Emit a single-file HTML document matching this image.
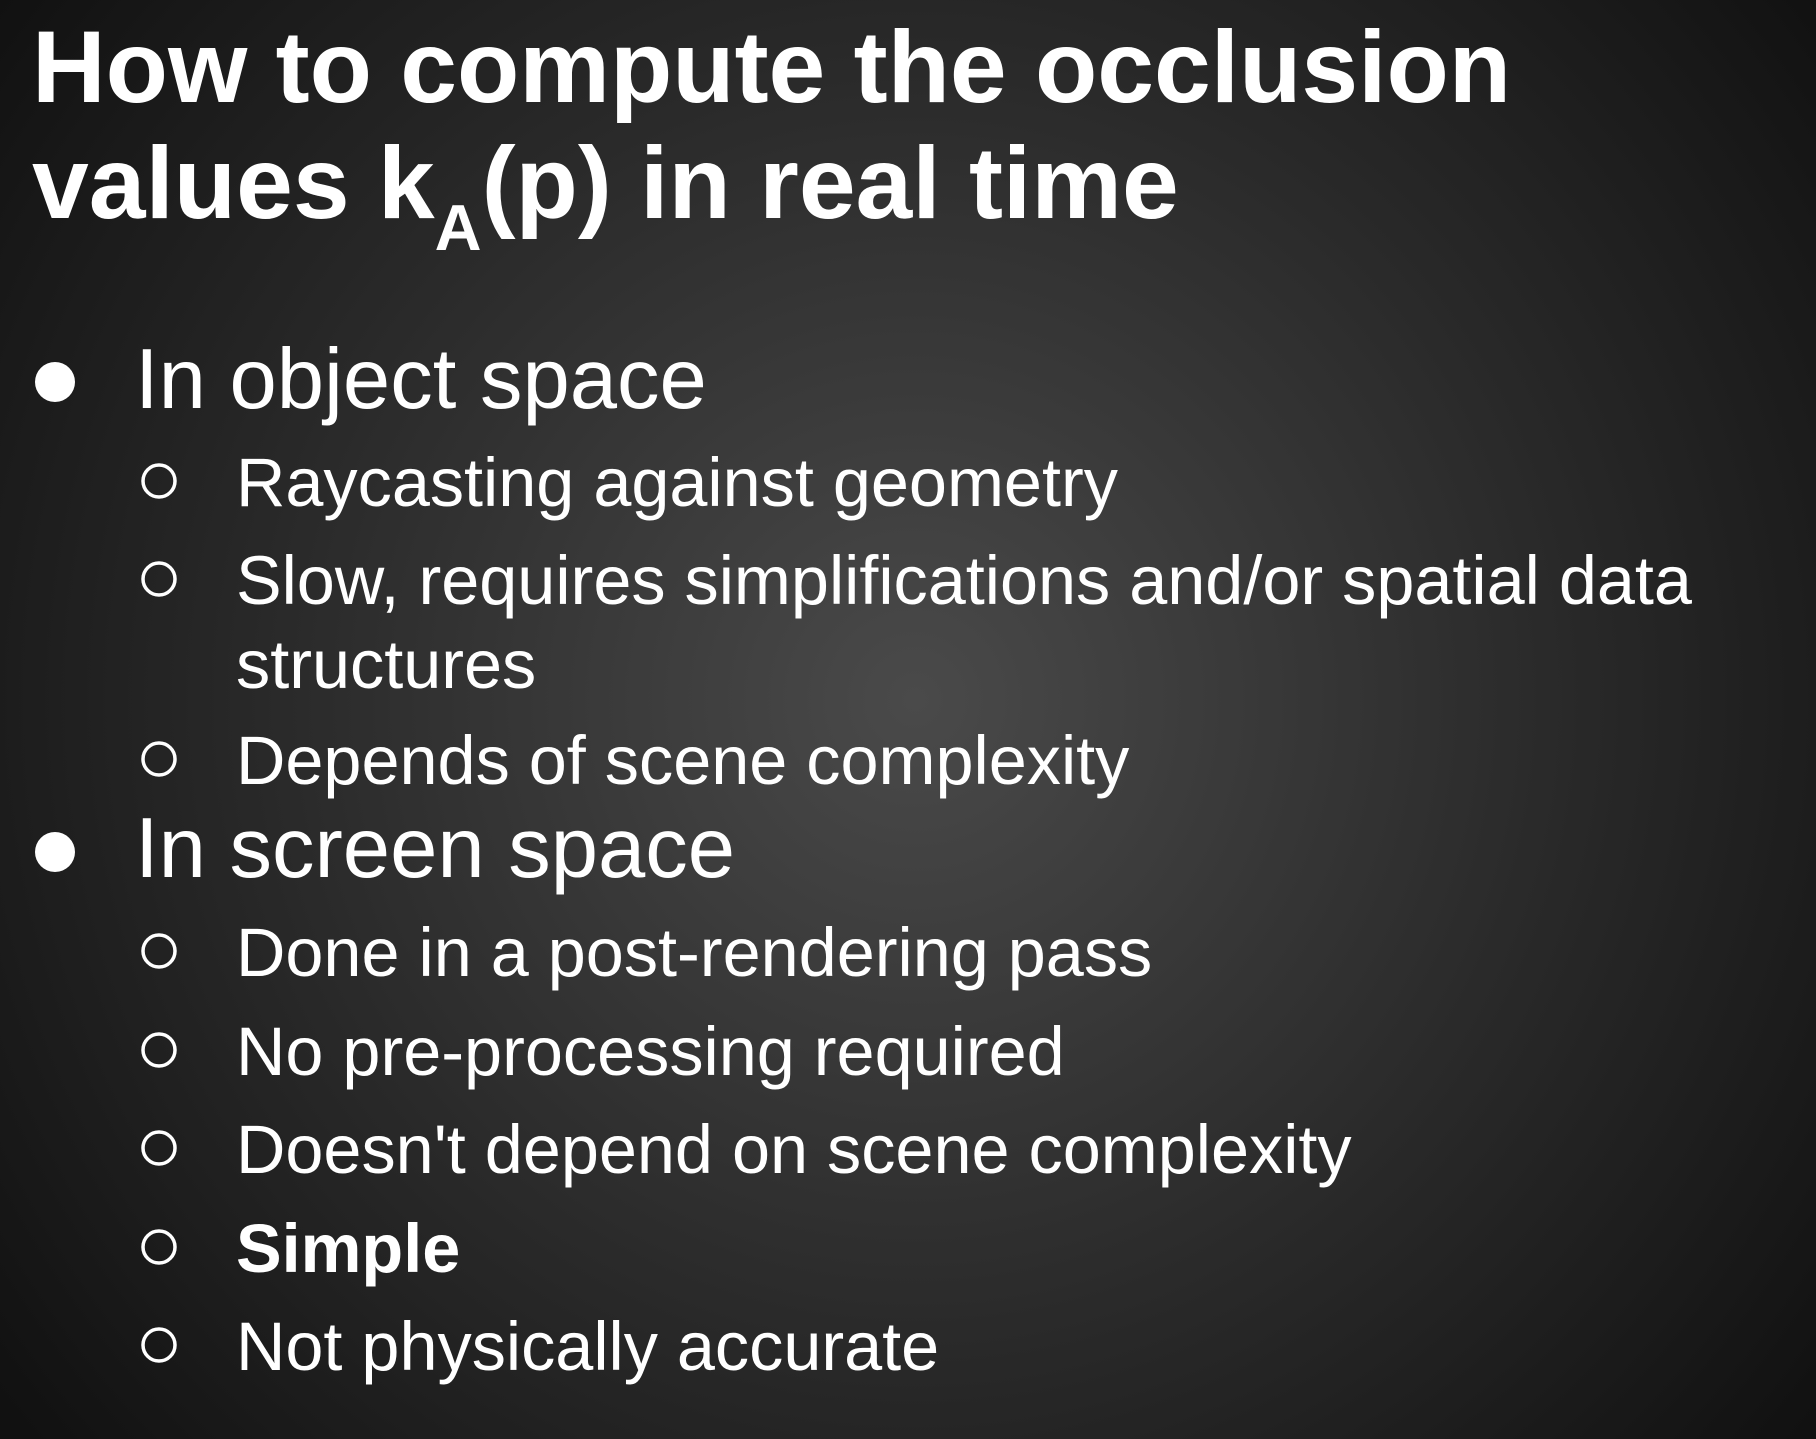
<!DOCTYPE html>
<html><head><meta charset="utf-8"><style>
html,body{margin:0;padding:0;width:1816px;height:1439px;overflow:hidden;background:#1a1a1a}
svg{display:block}
text{font-family:"Liberation Sans",Arial,sans-serif;fill:#fff}
</style></head><body>
<svg width="1816" height="1439" viewBox="0 0 1816 1439">
<defs>
<radialGradient id="g" cx="915" cy="700" r="1150" gradientUnits="userSpaceOnUse">
<stop offset="0" stop-color="#4a4a4a"/>
<stop offset="0.55" stop-color="#2a2a2a"/>
<stop offset="1" stop-color="#111"/>
</radialGradient>
</defs>
<rect width="1816" height="1439" fill="url(#g)"/>
<text x="32" y="102" font-size="102" font-weight="bold">How to compute the occlusion</text>
<text x="32" y="218" font-size="102" font-weight="bold">values k<tspan font-size="65" dy="32">A</tspan><tspan dy="-32">(p) in real time</tspan></text>

<g font-size="85">
<circle cx="55" cy="382" r="20" fill="#fff"/>
<text x="135" y="408">In object space</text>
<circle cx="55" cy="852" r="20" fill="#fff"/>
<text x="135" y="877">In screen space</text>
</g>
<g fill="none" stroke="#fff" stroke-width="3.5">
<circle cx="159" cy="481" r="16"/>
<circle cx="159" cy="579" r="16"/>
<circle cx="159" cy="759" r="16"/>
<circle cx="159" cy="951" r="16"/>
<circle cx="159" cy="1050" r="16"/>
<circle cx="159" cy="1148" r="16"/>
<circle cx="159" cy="1247" r="16"/>
<circle cx="159" cy="1345" r="16"/>
</g>
<g font-size="68.4">
<text x="236" y="506">Raycasting against geometry</text>
<text x="236" y="604">Slow, requires simplifications and/or spatial data</text>
<text x="236" y="688">structures</text>
<text x="236" y="784">Depends of scene complexity</text>
<text x="236" y="976">Done in a post-rendering pass</text>
<text x="236" y="1075">No pre-processing required</text>
<text x="236" y="1173">Doesn't depend on scene complexity</text>
<text x="236" y="1272" font-weight="bold">Simple</text>
<text x="236" y="1370">Not physically accurate</text>
</g>
</svg>
</body></html>
